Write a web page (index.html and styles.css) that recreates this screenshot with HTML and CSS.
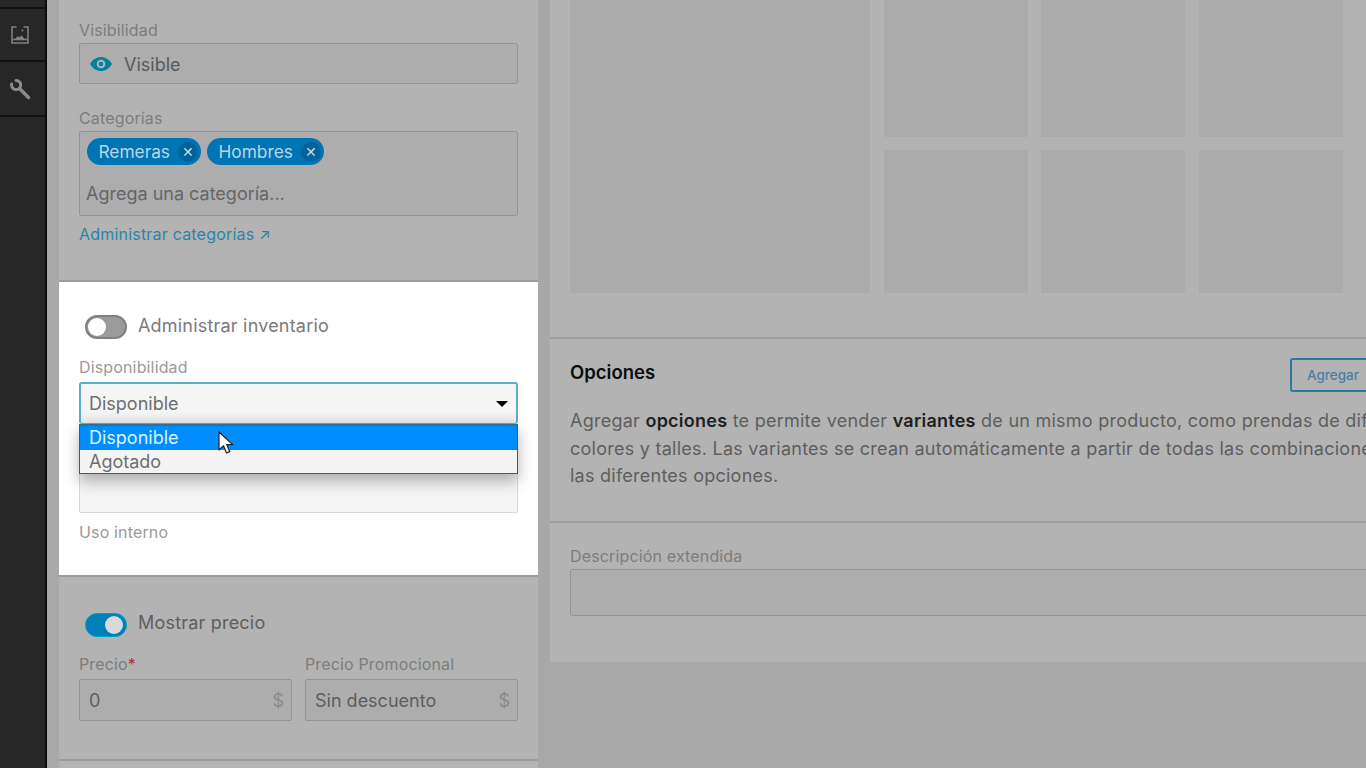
FILE: index.html
```html
<!DOCTYPE html>
<html lang="es">
<head>
<meta charset="utf-8">
<title>Producto</title>
<link rel="stylesheet" href="styles.css">
</head>
<body>
<div class="app">
  <nav class="rail">
    <div class="rail-top"></div>
    <div class="rail-item">
      <svg width="20" height="20" viewBox="0 0 20 20" fill="none" stroke="#7f7f7f" stroke-width="1.600"><path d="M6.500 2H2v16h16V2h-4.500"/><path d="M2 14.500h16"/><path d="M5 14l2.500-2.800 1.800 1 2-1.800L15 14z" fill="#7f7f7f" stroke="none"/><circle cx="12.500" cy="5.500" r="1.100" fill="#7f7f7f" stroke="none"/></svg>
    </div>
    <div class="rail-item">
      <svg width="22" height="22" viewBox="0 0 22 22" fill="none" stroke="#8c8c8c" stroke-linecap="round"><path d="M2.600 6A4.600 4.600 0 1 0 7 2.400" stroke-width="3"/><path d="M10.500 10.500 19.500 19.500" stroke-width="3.400"/></svg>
    </div>
  </nav>
  <main class="content">
    <section class="left">
      <div class="block block-top">
        <div class="label">Visibilidad</div>
        <div class="field field-dim visible-field">
          <svg class="eye" width="24" height="16" viewBox="0 0 24 16"><path d="M1 8C4 3 8 1 12 1s8 2 11 7c-3 5-7 7-11 7S4 13 1 8z" fill="#00829f"/><circle cx="12" cy="8" r="4.300" fill="#b3b3b3"/><circle cx="12" cy="8" r="2.300" fill="#00829f"/></svg>
          <span>Visible</span>
        </div>
        <div class="label label-cat">Categorías</div>
        <div class="tags-box">
          <div class="tags">
            <span class="tag">Remeras<span class="tag-x">✕</span></span>
            <span class="tag">Hombres<span class="tag-x">✕</span></span>
          </div>
          <div class="tags-input">Agrega una categoría...</div>
        </div>
        <a class="link">Administrar categorías <span class="arrow">↗</span></a>
      </div>

      <div class="block block-white">
        <div class="toggle-row">
          <span class="toggle toggle-off"><span class="knob"></span></span>
          <span>Administrar inventario</span>
        </div>
        <div class="label label-light">Disponibilidad</div>
        <div class="select-wrap">
          <div class="select">
            <span>Disponible</span>
            <span class="caret"></span>
          </div>
          <div class="menu">
            <div class="option option-on">Disponible</div>
            <div class="option">Agotado</div>
          </div>
          <svg class="cursor" width="18" height="26" viewBox="0 0 18 26"><path d="M1 1v18l4.500-4.200 3 7.200 3.200-1.400-3-7h6z" fill="#fff" stroke="#222" stroke-width="1.200" stroke-linejoin="round"/></svg>
        </div>
        <div class="field field-light"></div>
        <div class="hint">Uso interno</div>
      </div>

      <div class="block block-price">
        <div class="toggle-row toggle-row-dim">
          <span class="toggle toggle-on"><span class="knob"></span></span>
          <span>Mostrar precio</span>
        </div>
        <div class="price-grid">
          <div>
            <div class="label">Precio<span class="req">*</span></div>
            <div class="field field-dim price-field"><span>0</span><span class="cur">$</span></div>
          </div>
          <div>
            <div class="label">Precio Promocional</div>
            <div class="field field-dim price-field"><span>Sin descuento</span><span class="cur">$</span></div>
          </div>
        </div>
      </div>
    </section>

    <section class="right">
      <div class="gallery">
        <div class="tile tile-big"></div>
        <div class="tile"></div><div class="tile"></div><div class="tile"></div>
        <div class="tile"></div><div class="tile"></div><div class="tile"></div>
      </div>
      <div class="options">
        <div class="options-head">
          <h2>Opciones</h2>
          <button class="add">Agregar opción</button>
        </div>
        <p>Agregar <b>opciones</b> te permite vender <b>variantes</b> de un mismo producto, como prendas de diferentes<br>colores y talles. Las variantes se crean automáticamente a partir de todas las combinaciones de<br>las diferentes opciones.</p>
      </div>
      <div class="extended">
        <div class="label">Descripción extendida</div>
        <div class="field field-dim extended-field"></div>
      </div>
    </section>
  </main>
</div>
</body>
</html>
```

FILE: styles.css
```css
* { box-sizing: border-box; }
html, body { margin: 0; height: 100%; overflow: hidden; }
body { font-family: Inter, "Liberation Sans", sans-serif; font-size: 16px; color: #5a5a5a; background: #a8a8a8; }
.app { display: flex; width: 1366px; height: 768px; overflow: hidden; }

.rail { width: 47px; flex: none; background: #272727; border-right: 2px solid #0c0c0c; }
.rail-top { height: 9px; border-bottom: 2px solid #111; }
.rail-item { height: 53px; display: flex; align-items: center; justify-content: center; padding-right: 5px; border-bottom: 2px solid #111; }
.rail-item:last-child { height: 55px; }

.content { flex: 1; display: flex; align-items: flex-start; padding-left: 12px; gap: 12px; }

.left { width: 479px; flex: none; height: 768px; background: #b3b3b3; }
.block { padding-left: 20px; padding-right: 20px; }
.block-top { height: 282px; padding-top: 21px; border-bottom: 2px solid #9c9c9c; }
.label { font-size: 16px; line-height: 19px; color: #7d7d7d; letter-spacing: .15px; }
.label-cat { margin-top: 25px; }
.label-light { color: #9a9a9a; }
.field { border: 1px solid #949494; border-radius: 2px; }
.field-dim { background: #adadad; }
.visible-field { height: 41px; margin-top: 3px; display: flex; align-items: center; padding: 1px 0 0 9px; gap: 11px; font-size: 18px; }
.tags-box { height: 85px; margin-top: 3px; background: #adadad; border: 1px solid #949494; border-radius: 2px; padding: 6px; }
.tags { display: flex; gap: 6px; padding-left: 1px; }
.tag { height: 27px; display: inline-flex; align-items: center; gap: 8px; padding: 0 3px 0 11.500px; border-radius: 14px; background: #0075b5; color: #b9d6e4; font-size: 17.300px; }
.tag-x { width: 20px; height: 20px; border-radius: 50%; background: #00629a; color: #c8dbe6; font-size: 14px; display: flex; align-items: center; justify-content: center; }
.tags-input { margin-top: 18px; font-size: 18px; line-height: 22px; color: #666; }
.link { display: block; margin-top: 8px; color: #2b84a6; font-size: 16px; line-height: 20px; letter-spacing: .2px; }
.arrow { font-size: 15px; }

.block-white { height: 295px; background: #fff; padding-top: 30px; border-bottom: 2px solid #9c9c9c; color: #7a7a7a; }
.toggle-row { display: flex; align-items: center; gap: 11px; padding-left: 6px; font-size: 18px; letter-spacing: .2px; height: 26px; }
.toggle { width: 42px; height: 24px; border-radius: 12px; position: relative; display: block; flex: none; margin-top: 4px; }
.toggle-off { background: #9b9b9b; border: 2px solid #808080; }
.toggle-on { background: #0080b8; border: 1px solid #00a0c0; margin-top: 6px; }
.knob { position: absolute; top: 1px; width: 18px; height: 18px; border-radius: 50%; background: #fff; left: 1px; }
.toggle-on .knob { left: auto; right: 3px; top: 2px; background: #d9d9d9; }
.block-white .label { margin-top: 20px; }
.select-wrap { position: relative; margin-top: 5px; }
.select { height: 42px; display: flex; align-items: center; justify-content: space-between; padding: 0 8px; border: 2px solid #5aaec9; border-radius: 3px; background: linear-gradient(#f5f5f5 70%, #e6e6e6); font-size: 18px; color: #6e6e6e; border-bottom-width: 1px; }
.caret { width: 0; height: 0; border-left: 6.500px solid transparent; border-right: 6.500px solid transparent; border-top: 6px solid #000; }
.menu { position: absolute; left: 0; right: 0; top: 42px; height: 50px; background: #f4f4f4; border: 1px solid #555; border-top: 2px solid #33708c; box-shadow: 0 7px 14px rgba(0,0,0,.3); font-size: 18px; color: #6e6e6e; }
.option { height: 23px; line-height: 23px; padding-left: 9px; }
.option-on { height: 24px; background: #008cff; color: #d8f6ff; }
.cursor { position: absolute; left: 139px; top: 49px; }
.field-light { height: 42px; margin-top: 47px; background: #f5f5f5; border-color: #d8d8d8; }
.hint { margin-top: 9px; font-size: 16px; line-height: 20px; color: #9a9a9a; letter-spacing: .15px; }

.block-price { height: 184px; padding-top: 32px; border-bottom: 2px solid #9c9c9c; }
.toggle-row-dim { color: #5e5e5e; }
.price-grid { display: grid; grid-template-columns: 1fr 1fr; gap: 13px; margin-top: 20px; }
.price-field { height: 42px; margin-top: 5px; display: flex; justify-content: space-between; align-items: center; padding: 0 7px 0 9px; font-size: 18px; color: #5e5e5e; }
.cur { color: #8a8a8a; }
.req { color: #a33; }

.right { flex: 1; height: 662px; background: #b3b3b3; overflow: hidden; }
.gallery { display: grid; grid-template-columns: 300px 144px 144px 144px; grid-template-rows: 137px 143px; gap: 13px 13.600px; margin-left: 20px; height: 337px; }
.tile { background: #ababab; }
.tile-big { grid-row: span 2; }
.options { height: 186px; border-top: 2px solid #9c9c9c; border-bottom: 2px solid #9c9c9c; padding: 0 0 0 20px; width: 816px; }
.options-head { display: flex; justify-content: space-between; align-items: flex-start; padding-top: 19px; white-space: nowrap; }
.options h2 { margin: 2px 0 0; font-size: 18.500px; font-weight: 600; color: #0d0d0d; line-height: 24px; }
.add { flex: none; width: 140px; height: 34px; margin-right: -64px; background: transparent; border: 2px solid #2b7ba0; border-radius: 3px; color: #4a7fa5; font: 500 13.500px Inter, "Liberation Sans", sans-serif; word-spacing: 4px; text-align: left; padding: 0 0 0 15px; }
.options p { margin: 15px 0 0; font-size: 18px; line-height: 27.500px; color: #5e5e5e; white-space: nowrap; letter-spacing: .25px; }
.options b { color: #1f1f1f; font-weight: 600; }
.extended { padding: 23px 0 0 20px; }
.extended .label { line-height: 20px; }
.extended-field { height: 47px; margin-top: 3px; width: 900px; }
```
